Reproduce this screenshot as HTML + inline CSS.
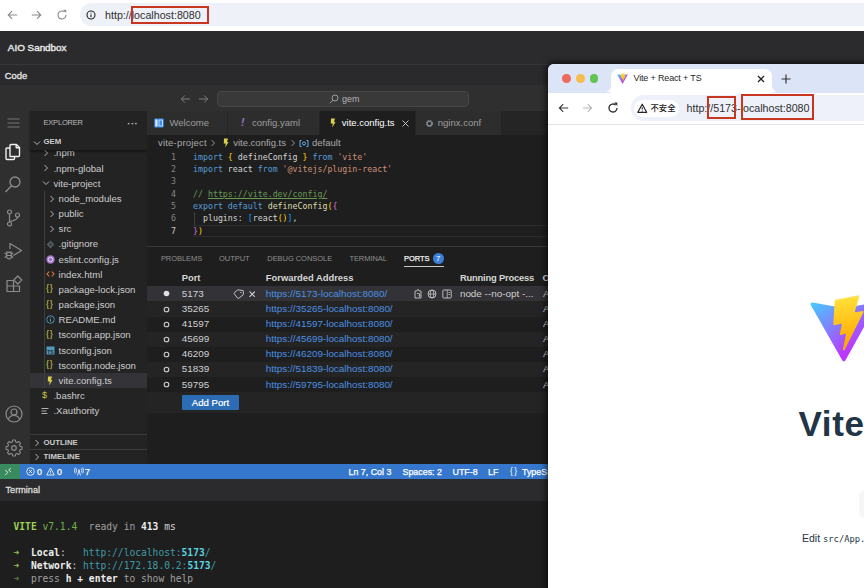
<!DOCTYPE html>
<html>
<head>
<meta charset="utf-8">
<title>AIO Sandbox</title>
<style>
*{box-sizing:border-box;margin:0;padding:0}
html,body{width:864px;height:588px;overflow:hidden;background:#1e1e1e;font-family:"Liberation Sans","Noto Sans CJK SC",sans-serif;}
.abs{position:absolute}
#root{position:relative;width:864px;height:588px;overflow:hidden}
.t{position:absolute;white-space:nowrap;line-height:1}
.mono{font-family:"DejaVu Sans Mono","Liberation Mono",monospace}
/* outer browser */
#obar{left:0;top:0;width:864px;height:31px;background:#fff}
#opill{left:80px;top:3px;width:800px;height:23px;border-radius:12px;background:#eef1f8}
.redbox{border:2.600px solid #c8361f;position:absolute}
/* app header */
#aio{left:0;top:31px;width:864px;height:33.500px;background:#2b2b2d;border-bottom:1px solid #363638}
#code{left:0;top:64.500px;width:864px;height:21px;background:#2a2a2c;border-bottom:1px solid #353537}
/* vscode */
#title{left:0;top:85px;width:864px;height:26px;background:#2f2f30}
#search{left:217px;top:91px;width:252px;height:16px;border-radius:4px;background:#393939;border:1px solid #464646}
#act{left:0;top:111px;width:30px;height:353px;background:#2f2f30}
#side{left:30px;top:111px;width:117px;height:353px;background:#232324}
#tabs{left:147px;top:111px;width:717px;height:23.600px;background:#252526}
.tab{position:absolute;top:0;height:23.600px;background:#2d2d2d;border-right:1px solid #252526}
.tab.on{background:#1e1e1e}
#editor{left:147px;top:134.600px;width:717px;height:111.400px;background:#1e1e1e}
#panel{left:147px;top:246px;width:717px;height:218px;background:#1e1e1e;border-top:1px solid #3a3a3a}
#status{left:0;top:464px;width:864px;height:15.400px;background:#3477cc}
#termh{left:0;top:479.400px;width:864px;height:21.800px;background:#2b2b2d}
#term{left:0;top:501.200px;width:864px;height:88px;background:#1e1e1e}
.tree{font-size:9.6px;color:#cccccc}
.code{font-size:8.280px}
.row{position:absolute;left:147px;width:420px;height:15px}

#codebox{left:147px;top:150.500px;width:717px;font-size:8.280px;color:#d4d4d4}
#codebox .ln{position:relative;height:12.400px;line-height:12.400px;white-space:pre}
#codebox .no{position:absolute;left:0;width:29px;text-align:right;color:#858585}
#codebox .cur .no{color:#c6c6c6}
#codebox .tx{position:absolute;left:46px}
#codebox .cur:after{content:"";position:absolute;left:46px;right:0;top:0;bottom:0;border-top:1px solid #2c2c2c;border-bottom:1px solid #2c2c2c}
#codebox .ig{position:absolute;left:1px;top:0;width:1px;height:12.400px;background:#404040}
</style>
</head>
<body>
<div id="root">
<!-- OUTER BROWSER BAR -->
<div id="obar" class="abs"></div>
<div id="opill" class="abs"></div>

<svg class="abs" style="left:6.5px;top:10px" width="11" height="10" viewBox="0 0 11 10"><path d="M10.2 5H1.5M5 1.2L1.2 5L5 8.8" stroke="#8a8a8a" stroke-width="1.1" fill="none"/></svg>
<svg class="abs" style="left:31px;top:10px" width="11" height="10" viewBox="0 0 11 10"><path d="M0.8 5H9.5M6 1.2L9.8 5L6 8.8" stroke="#8a8a8a" stroke-width="1.1" fill="none"/></svg>
<svg class="abs" style="left:55.5px;top:9px" width="12" height="12" viewBox="0 0 12 12"><path d="M10 6A4 4 0 1 1 8.6 2.95" stroke="#8a8a8a" stroke-width="1.1" fill="none"/><path d="M7.2 0.8H10.2V3.9Z" fill="#8a8a8a"/></svg>
<svg class="abs" style="left:86px;top:10px" width="10" height="10" viewBox="0 0 10 10"><circle cx="5" cy="5" r="4" stroke="#222" stroke-width="1.1" fill="none"/><path d="M5 4.4V7.2M5 2.7V3.6" stroke="#222" stroke-width="1.1"/></svg>
<div class="t" style="left:105px;top:9.5px;font-size:10.700px;color:#303030">http://localhost:8080</div>
<div class="redbox" style="left:130.800px;top:5.700px;width:78.500px;height:18.500px"></div>


<!-- APP HEADER -->
<div id="aio" class="abs"></div>
<div class="t" style="left:7.800px;top:42.800px;font-size:9.900px;color:#e8e8e8;-webkit-text-stroke:0.4px #e8e8e8">AIO Sandbox</div>
<div id="code" class="abs"></div>
<div class="t" style="left:4.800px;top:71px;font-size:9.400px;color:#e0e0e0;-webkit-text-stroke:0.35px #e0e0e0">Code</div>

<!-- VSCODE -->
<div id="title" class="abs"></div>
<div id="search" class="abs"></div>

<svg class="abs" style="left:180px;top:94px" width="11" height="10" viewBox="0 0 11 10"><path d="M10 5H1.5M4.8 1.5L1.3 5L4.8 8.5" stroke="#7e7e7e" stroke-width="1" fill="none"/></svg>
<svg class="abs" style="left:198px;top:94px" width="11" height="10" viewBox="0 0 11 10"><path d="M1 5H9.5M6.2 1.5L9.7 5L6.2 8.5" stroke="#7e7e7e" stroke-width="1" fill="none"/></svg>
<svg class="abs" style="left:329px;top:94px" width="10" height="10" viewBox="0 0 10 10"><circle cx="6" cy="4" r="3" stroke="#a8a8a8" stroke-width="0.9" fill="none"/><path d="M3.8 6.2L0.8 9.2" stroke="#a8a8a8" stroke-width="0.9"/></svg>
<div class="t" style="left:342px;top:94.5px;font-size:9px;color:#b4b4b4">gem</div>

<div id="act" class="abs"></div>

<svg class="abs" style="left:7px;top:117px" width="14" height="12" viewBox="0 0 14 12"><path d="M0.5 2H12.5M0.5 6H12.5M0.5 10H12.5" stroke="#7d7d7d" stroke-width="0.9"/></svg>
<!-- files -->
<svg class="abs" style="left:3px;top:141.500px" width="20" height="20" viewBox="0 0 20 20" fill="none" stroke="#f0f0f0" stroke-width="1.4" stroke-linejoin="round"><path d="M7 14.5V3.5Q7 2.5 8 2.5H13.5L16.5 5.5V13.5Q16.5 14.5 15.5 14.5H8Q7 14.5 7 14.5Z"/><path d="M13.2 2.7V5.8H16.3"/><path d="M7 6H4Q3 6 3 7V16.5Q3 17.5 4 17.5H10.5Q11.5 17.5 11.5 16.5V14.5"/></svg>
<!-- search -->
<svg class="abs" style="left:3.400px;top:174.200px" width="20" height="20" viewBox="0 0 20 20" fill="none" stroke="#8c8c8c" stroke-width="1.3"><circle cx="12" cy="8" r="5"/><path d="M8.5 11.8L2.5 18"/></svg>
<!-- scm -->
<svg class="abs" style="left:2.800px;top:207.500px" width="20" height="20" viewBox="0 0 20 20" fill="none" stroke="#8c8c8c" stroke-width="1.2"><circle cx="6.5" cy="4" r="2"/><circle cx="6.5" cy="16" r="2"/><circle cx="14.5" cy="7" r="2"/><path d="M6.5 6V14M14.5 9Q14.5 12 6.5 13.5"/></svg>
<!-- debug -->
<svg class="abs" style="left:1.800px;top:239.500px" width="22" height="22" viewBox="0 0 22 22" fill="none" stroke="#8c8c8c" stroke-width="1.2" stroke-linejoin="round"><path d="M8 9V3.5L19.5 10.5L11.5 15.5"/><ellipse cx="7" cy="15.5" rx="2.6" ry="3.3"/><path d="M4.4 14L2.5 13M4.4 16.5L2.5 17.5M9.6 14L11.3 13M9.6 16.5L11.3 17.5M5.3 12.5L4.5 11.3M8.7 12.5L9.5 11.3M4.5 15.5H9.5"/></svg>
<!-- extensions -->
<svg class="abs" style="left:4px;top:274px" width="20" height="20" viewBox="0 0 20 20" fill="none" stroke="#8c8c8c" stroke-width="1.2" stroke-linejoin="round"><path d="M3 6.5H9.5V17.5H3ZM3 12H15.5V17.5H9.5M9.5 12H15.5"/><path d="M13.8 2L17.8 6L13.8 10L9.8 6Z"/></svg>
<!-- account -->
<svg class="abs" style="left:3.5px;top:404px" width="20" height="20" viewBox="0 0 20 20" fill="none" stroke="#8c8c8c" stroke-width="1.2"><circle cx="10" cy="10" r="8"/><circle cx="10" cy="8" r="3"/><path d="M4.3 15.5Q5.5 11.5 10 11.5Q14.5 11.5 15.7 15.5"/></svg>
<!-- gear -->
<svg class="abs" style="left:3.5px;top:437.5px" width="20" height="20" viewBox="0 0 20 20" fill="none" stroke="#8c8c8c" stroke-width="1.2" stroke-linejoin="round"><path d="M8.6 2h2.8l.4 2.1 1.5.7 1.8-1.2 2 2-1.2 1.8.7 1.5 2.100.4v2.800l-2.100.4-.7 1.500 1.200 1.800-2 2-1.800-1.200-1.500.7-.4 2.100h-2.800l-.4-2.100-1.500-.7-1.800 1.200-2-2 1.200-1.800-.7-1.500-2.100-.4v-2.800l2.100-.4.700-1.500-1.200-1.800 2-2 1.800 1.200 1.500-.7z" transform="translate(10 10) scale(0.92) translate(-10 -10.700)"/><circle cx="10" cy="10" r="2.300"/></svg>

<div id="side" class="abs"></div>
<div class="abs" style="left:30px;top:372.95px;width:117px;height:15.2px;background:#343438"></div>
<div class="abs" style="left:44px;top:190.94px;width:1px;height:197.21px;background:#3e3e3e"></div>
<svg class="abs" style="left:42px;top:149.00px" width="8" height="8" viewBox="0 0 8 8"><path d="M2.5 1L5.5 4L2.5 7" stroke="#c5c5c5" stroke-width="0.9" fill="none"/></svg>
<div class="t tree" style="left:53.4px;top:148.40px">.npm</div>
<svg class="abs" style="left:42px;top:164.17px" width="8" height="8" viewBox="0 0 8 8"><path d="M2.5 1L5.5 4L2.5 7" stroke="#c5c5c5" stroke-width="0.9" fill="none"/></svg>
<div class="t tree" style="left:53.4px;top:163.57px">.npm-global</div>
<svg class="abs" style="left:42px;top:179.34px" width="8" height="8" viewBox="0 0 8 8"><path d="M1 2.5L4 5.5L7 2.5" stroke="#c5c5c5" stroke-width="0.9" fill="none"/></svg>
<div class="t tree" style="left:53.4px;top:178.74px">vite-project</div>
<svg class="abs" style="left:47.5px;top:194.51px" width="8" height="8" viewBox="0 0 8 8"><path d="M2.5 1L5.5 4L2.5 7" stroke="#c5c5c5" stroke-width="0.9" fill="none"/></svg>
<div class="t tree" style="left:58.6px;top:193.91px">node_modules</div>
<svg class="abs" style="left:47.5px;top:209.68px" width="8" height="8" viewBox="0 0 8 8"><path d="M2.5 1L5.5 4L2.5 7" stroke="#c5c5c5" stroke-width="0.9" fill="none"/></svg>
<div class="t tree" style="left:58.6px;top:209.08px">public</div>
<svg class="abs" style="left:47.5px;top:224.85px" width="8" height="8" viewBox="0 0 8 8"><path d="M2.5 1L5.5 4L2.5 7" stroke="#c5c5c5" stroke-width="0.9" fill="none"/></svg>
<div class="t tree" style="left:58.6px;top:224.25px">src</div>
<svg class="abs" style="left:45.8px;top:239.52px" width="9" height="9" viewBox="0 0 9 9"><path d="M4.500.6L8.400 4.500L4.500 8.400L.6 4.500Z" fill="#4d5a5e"/><circle cx="4.500" cy="4.500" r="1" fill="#2a2a2a"/></svg>
<div class="t tree" style="left:58.6px;top:239.42px">.gitignore</div>
<svg class="abs" style="left:45.8px;top:254.69px" width="9" height="9" viewBox="0 0 9 9"><circle cx="4.500" cy="4.500" r="4.200" fill="#a074c4"/><circle cx="4.500" cy="4.500" r="2.300" fill="none" stroke="#e6d8f5" stroke-width="0.9"/></svg>
<div class="t tree" style="left:58.6px;top:254.59px">eslint.config.js</div>
<svg class="abs" style="left:45.8px;top:270.36px" width="9" height="8" viewBox="0 0 9 8"><path d="M3.300 1.500L1 4L3.300 6.500M5.700 1.500L8 4L5.700 6.500" stroke="#e37933" stroke-width="1.100" fill="none"/></svg>
<div class="t tree" style="left:58.6px;top:269.76px">index.html</div>
<div class="t" style="left:46.1px;top:284.33px;font-size:9.200px;color:#c9c94a;letter-spacing:0.6px">{}</div>
<div class="t tree" style="left:58.6px;top:284.93px">package-lock.json</div>
<div class="t" style="left:46.1px;top:299.50px;font-size:9.200px;color:#c9c94a;letter-spacing:0.6px">{}</div>
<div class="t tree" style="left:58.6px;top:300.10px">package.json</div>
<svg class="abs" style="left:45.8px;top:315.37px" width="9" height="9" viewBox="0 0 9 9"><circle cx="4.500" cy="4.500" r="3.800" fill="none" stroke="#519aba" stroke-width="0.9"/><path d="M4.500 4V6.600M4.500 2.400V3.200" stroke="#519aba" stroke-width="1"/></svg>
<div class="t tree" style="left:58.6px;top:315.27px">README.md</div>
<div class="t" style="left:46.1px;top:329.84px;font-size:9.200px;color:#c9c94a;letter-spacing:0.6px">{}</div>
<div class="t tree" style="left:58.6px;top:330.44px">tsconfig.app.json</div>
<svg class="abs" style="left:45.8px;top:345.71px" width="9" height="9" viewBox="0 0 9 9"><rect x=".5" y=".5" width="8" height="8" fill="#519aba"/><text x="1.300" y="7.600" font-size="5" font-weight="bold" font-family="Liberation Sans,sans-serif" fill="#1e2a33">TS</text></svg>
<div class="t tree" style="left:58.6px;top:345.61px">tsconfig.json</div>
<div class="t" style="left:46.1px;top:360.18px;font-size:9.200px;color:#c9c94a;letter-spacing:0.6px">{}</div>
<div class="t tree" style="left:58.6px;top:360.78px">tsconfig.node.json</div>
<svg class="abs" style="left:46.3px;top:375.55px" width="8" height="10" viewBox="0 0 8 10"><path d="M2 .5H6L5 4H6.500L3.200 9.500L3.800 5.500H1.800Z" fill="#d8d04a"/></svg>
<div class="t tree" style="left:58.6px;top:375.95px">vite.config.ts</div>
<div class="t" style="left:42px;top:390.92px;font-size:9px;color:#cbcb41">$</div>
<div class="t tree" style="left:53.4px;top:391.12px">.bashrc</div>
<svg class="abs" style="left:41px;top:406.89px" width="8" height="8" viewBox="0 0 8 8"><path d="M.5 1.500H7.500M.5 4H5.500M.5 6.500H6.500" stroke="#b0b0b0" stroke-width="1"/></svg>
<div class="t tree" style="left:53.4px;top:406.29px">.Xauthority</div>
<div class="abs" style="left:30px;top:111px;width:117px;height:38.500px;background:#232324;box-shadow:0 1.500px 2px rgba(0,0,0,0.4)"></div>
<div class="t" style="left:43.500px;top:119.200px;font-size:7.500px;color:#bbbbbb;letter-spacing:-0.2px">EXPLORER</div>
<div class="t" style="left:127.300px;top:118.500px;font-size:9.500px;color:#c5c5c5;letter-spacing:0.5px;font-weight:bold">···</div>
<svg class="abs" style="left:32.5px;top:138.50px" width="8" height="8" viewBox="0 0 8 8"><path d="M1 2.5L4 5.5L7 2.5" stroke="#c5c5c5" stroke-width="0.9" fill="none"/></svg>
<div class="t" style="left:43.500px;top:138.300px;font-size:7.800px;color:#cccccc;font-weight:bold;letter-spacing:0px">GEM</div>
<div class="abs" style="left:30px;top:433.500px;width:117px;height:1px;background:#3c3c3c"></div>
<div class="abs" style="left:30px;top:449px;width:117px;height:1px;background:#3c3c3c"></div>
<svg class="abs" style="left:32.5px;top:438.60px" width="8" height="8" viewBox="0 0 8 8"><path d="M2.5 1L5.5 4L2.5 7" stroke="#c5c5c5" stroke-width="0.9" fill="none"/></svg>
<div class="t" style="left:43.500px;top:438.500px;font-size:7.800px;color:#cccccc;font-weight:bold;letter-spacing:0px">OUTLINE</div>
<svg class="abs" style="left:32.5px;top:453.40px" width="8" height="8" viewBox="0 0 8 8"><path d="M2.5 1L5.5 4L2.5 7" stroke="#c5c5c5" stroke-width="0.9" fill="none"/></svg>
<div class="t" style="left:43.500px;top:453.200px;font-size:7.800px;color:#cccccc;font-weight:bold;letter-spacing:0px">TIMELINE</div>
<div id="tabs" class="abs">

<div class="tab" style="left:0;width:81px"></div>
<div class="tab" style="left:81px;width:92px"></div>
<div class="tab on" style="left:173px;width:96px"></div>
<div class="tab" style="left:269px;width:85.500px"></div>
<svg class="abs" style="left:7px;top:6.500px" width="10" height="10" viewBox="0 0 10 10"><rect x=".3" y=".5" width="9.400" height="9" rx="1" fill="#3b8eea"/><rect x="1.300" y="1.500" width="2.200" height="7" fill="#d6e9ff"/><path d="M5 2V8H8.500V2Z" fill="none" stroke="#d6e9ff" stroke-width=".8"/></svg>
<div class="t" style="left:22.500px;top:7px;font-size:9.500px;color:#9d9d9d">Welcome</div>
<div class="t" style="left:94px;top:6px;font-size:10.500px;color:#a074c4;font-weight:bold;font-style:italic">!</div>
<div class="t" style="left:105px;top:7px;font-size:9.500px;color:#9d9d9d">config.yaml</div>
<svg class="abs" style="left:182px;top:6.5px" width="8" height="10" viewBox="0 0 8 10"><path d="M2 .5H6L5 4H6.500L3.200 9.500L3.800 5.500H1.800Z" fill="#d8d04a"/></svg>
<div class="t" style="left:194.800px;top:7px;font-size:9.500px;color:#ffffff">vite.config.ts</div>
<svg class="abs" style="left:255px;top:8.500px" width="7" height="7" viewBox="0 0 7 7"><path d="M.5 .5L6.500 6.500M6.500 .5L.5 6.500" stroke="#d0d0d0" stroke-width=".9"/></svg>
<svg class="abs" style="left:277.500px;top:7.500px" width="9" height="9" viewBox="0 0 9 9"><circle cx="4.500" cy="4.500" r="2.600" fill="none" stroke="#7f8b91" stroke-width="1.800" stroke-dasharray="1.360 .68"/><circle cx="4.500" cy="4.500" r="2.300" fill="none" stroke="#7f8b91" stroke-width="1.100"/></svg>
<div class="t" style="left:290.800px;top:7px;font-size:9.500px;color:#9d9d9d">nginx.conf</div>

</div>
<div id="editor" class="abs"></div>
<div class="t" style="left:158px;top:138px;font-size:9.500px;letter-spacing:0.2px;color:#a9a9a9">vite-project</div>
<svg class="abs" style="left:209px;top:139px" width="8" height="8" viewBox="0 0 8 8"><path d="M2.500 1L5.500 4L2.500 7" stroke="#a0a0a0" stroke-width=".9" fill="none"/></svg>
<svg class="abs" style="left:221.5px;top:137.5px" width="8" height="10" viewBox="0 0 8 10"><path d="M2 .5H6L5 4H6.500L3.200 9.500L3.800 5.500H1.800Z" fill="#d8d04a"/></svg>
<div class="t" style="left:233.200px;top:138px;font-size:9.500px;color:#a9a9a9">vite.config.ts</div>
<svg class="abs" style="left:289px;top:139px" width="8" height="8" viewBox="0 0 8 8"><path d="M2.500 1L5.500 4L2.500 7" stroke="#a0a0a0" stroke-width=".9" fill="none"/></svg>
<svg class="abs" style="left:298.500px;top:138.500px" width="10" height="9" viewBox="0 0 10 9"><path d="M2.500 1.500H1V7.500H2.500M7.500 1.500H9V7.500H7.500" stroke="#75beff" stroke-width=".9" fill="none"/><circle cx="5" cy="4.500" r="1.500" fill="none" stroke="#75beff" stroke-width=".9"/></svg>
<div class="t" style="left:312px;top:138px;font-size:9.500px;color:#a9a9a9">default</div>
<div id="codebox" class="abs mono">
<div class="ln"><span class="no">1</span><span class="tx"><span style="color:#569cd6">import</span> <span style="color:#ffd700">{</span> <span style="color:#d4d4d4">defineConfig</span> <span style="color:#ffd700">}</span> <span style="color:#569cd6">from</span> <span style="color:#ce9178">'vite'</span></span></div>
<div class="ln"><span class="no">2</span><span class="tx"><span style="color:#569cd6">import</span> <span style="color:#d4d4d4">react</span> <span style="color:#569cd6">from</span> <span style="color:#ce9178">'@vitejs/plugin-react'</span></span></div>
<div class="ln"><span class="no">3</span><span class="tx"></span></div>
<div class="ln"><span class="no">4</span><span class="tx"><span style="color:#6a9955">// <span style="text-decoration:underline">https://vite.dev/config/</span></span></span></div>
<div class="ln"><span class="no">5</span><span class="tx"><span style="color:#569cd6">export</span> <span style="color:#569cd6">default</span> <span style="color:#dcdcaa">defineConfig</span><span style="color:#ffd700">(</span><span style="color:#da70d6">{</span></span></div>
<div class="ln"><span class="no">6</span><span class="tx"><i class="ig"></i>  <span style="color:#d4d4d4">plugins: </span><span style="color:#179fff">[</span><span style="color:#d4d4d4">react</span><span style="color:#ffd700">()</span><span style="color:#179fff">]</span><span style="color:#d4d4d4">,</span></span></div>
<div class="ln cur"><span class="no">7</span><span class="tx"><span style="color:#da70d6">}</span><span style="color:#ffd700">)</span></span></div>
</div>
<div id="panel" class="abs"></div>
<div class="abs" style="left:147px;top:286.30px;width:717px;height:15.15px;background:#333337"></div>
<div class="abs" style="left:147px;top:301.45px;width:717px;height:15.15px;background:#242425"></div>
<div class="abs" style="left:147px;top:331.75px;width:717px;height:15.15px;background:#242425"></div>
<div class="abs" style="left:147px;top:362.05px;width:717px;height:15.15px;background:#242425"></div>
<div class="abs" style="left:147px;top:392.350px;width:717px;height:20.650px;background:#242425"></div>
<div class="t" style="left:160.9px;top:254.800px;font-size:7.500px;color:#8e8e8e;letter-spacing:-0.05px">PROBLEMS</div>
<div class="t" style="left:219px;top:254.800px;font-size:7.500px;color:#8e8e8e;letter-spacing:-0.05px">OUTPUT</div>
<div class="t" style="left:267.3px;top:254.800px;font-size:7.500px;color:#8e8e8e;letter-spacing:-0.05px">DEBUG CONSOLE</div>
<div class="t" style="left:349.4px;top:254.800px;font-size:7.500px;color:#8e8e8e;letter-spacing:-0.05px">TERMINAL</div>
<div class="t" style="left:404px;top:254.800px;font-size:7.500px;color:#f0f0f0;letter-spacing:-0.05px;-webkit-text-stroke:0.25px #f0f0f0">PORTS</div>
<div class="abs" style="left:432.500px;top:253px;width:11px;height:11px;border-radius:50%;background:#3b7fd9"></div>
<div class="t" style="left:436px;top:254.800px;font-size:7.700px;color:#fff">7</div>
<div class="abs" style="left:404px;top:265.500px;width:40px;height:1.200px;background:#c8c8c8"></div>
<div class="t" style="left:181.700px;top:273px;font-size:9.400px;font-weight:bold;color:#d6d6d6">Port</div>
<div class="t" style="left:265.800px;top:273px;font-size:9.400px;font-weight:bold;color:#d6d6d6;letter-spacing:0px">Forwarded Address</div>
<div class="t" style="left:459.900px;top:273px;font-size:9.400px;font-weight:bold;color:#d6d6d6;letter-spacing:-0.2px">Running Process</div>
<div class="t" style="left:542.500px;top:273px;font-size:9.400px;font-weight:bold;color:#d6d6d6">Origin</div>
<svg class="abs" style="left:163px;top:290.37px" width="7" height="7" viewBox="0 0 7 7"><circle cx="3.500" cy="3.500" r="2.800" fill="#e0e0e0"/></svg>
<div class="t" style="left:181.700px;top:288.68px;font-size:9.900px;color:#d0d0d0">5173</div>
<div class="t" style="left:265.800px;top:288.68px;font-size:9.900px;color:#4c8fe2">https://5173-localhost:8080/</div>
<div class="t" style="left:459.900px;top:288.68px;font-size:9.900px;color:#d0d0d0">node --no-opt -...</div>
<div class="t" style="left:543px;top:288.68px;font-size:9.900px;color:#d0d0d0">Auto Forwarded</div>
<svg class="abs" style="left:163px;top:305.52px" width="7" height="7" viewBox="0 0 7 7"><circle cx="3.500" cy="3.500" r="2.300" fill="none" stroke="#cfcfcf" stroke-width="1.100"/></svg>
<div class="t" style="left:181.700px;top:303.82px;font-size:9.900px;color:#d0d0d0">35265</div>
<div class="t" style="left:265.800px;top:303.82px;font-size:9.900px;color:#4c8fe2">https://35265-localhost:8080/</div>
<div class="t" style="left:543px;top:303.82px;font-size:9.900px;color:#d0d0d0">Auto Forwarded</div>
<svg class="abs" style="left:163px;top:320.68px" width="7" height="7" viewBox="0 0 7 7"><circle cx="3.500" cy="3.500" r="2.300" fill="none" stroke="#cfcfcf" stroke-width="1.100"/></svg>
<div class="t" style="left:181.700px;top:318.98px;font-size:9.900px;color:#d0d0d0">41597</div>
<div class="t" style="left:265.800px;top:318.98px;font-size:9.900px;color:#4c8fe2">https://41597-localhost:8080/</div>
<div class="t" style="left:543px;top:318.98px;font-size:9.900px;color:#d0d0d0">Auto Forwarded</div>
<svg class="abs" style="left:163px;top:335.82px" width="7" height="7" viewBox="0 0 7 7"><circle cx="3.500" cy="3.500" r="2.300" fill="none" stroke="#cfcfcf" stroke-width="1.100"/></svg>
<div class="t" style="left:181.700px;top:334.12px;font-size:9.900px;color:#d0d0d0">45699</div>
<div class="t" style="left:265.800px;top:334.12px;font-size:9.900px;color:#4c8fe2">https://45699-localhost:8080/</div>
<div class="t" style="left:543px;top:334.12px;font-size:9.900px;color:#d0d0d0">Auto Forwarded</div>
<svg class="abs" style="left:163px;top:350.98px" width="7" height="7" viewBox="0 0 7 7"><circle cx="3.500" cy="3.500" r="2.300" fill="none" stroke="#cfcfcf" stroke-width="1.100"/></svg>
<div class="t" style="left:181.700px;top:349.28px;font-size:9.900px;color:#d0d0d0">46209</div>
<div class="t" style="left:265.800px;top:349.28px;font-size:9.900px;color:#4c8fe2">https://46209-localhost:8080/</div>
<div class="t" style="left:543px;top:349.28px;font-size:9.900px;color:#d0d0d0">Auto Forwarded</div>
<svg class="abs" style="left:163px;top:366.12px" width="7" height="7" viewBox="0 0 7 7"><circle cx="3.500" cy="3.500" r="2.300" fill="none" stroke="#cfcfcf" stroke-width="1.100"/></svg>
<div class="t" style="left:181.700px;top:364.43px;font-size:9.900px;color:#d0d0d0">51839</div>
<div class="t" style="left:265.800px;top:364.43px;font-size:9.900px;color:#4c8fe2">https://51839-localhost:8080/</div>
<div class="t" style="left:543px;top:364.43px;font-size:9.900px;color:#d0d0d0">Auto Forwarded</div>
<svg class="abs" style="left:163px;top:381.28px" width="7" height="7" viewBox="0 0 7 7"><circle cx="3.500" cy="3.500" r="2.300" fill="none" stroke="#cfcfcf" stroke-width="1.100"/></svg>
<div class="t" style="left:181.700px;top:379.58px;font-size:9.900px;color:#d0d0d0">59795</div>
<div class="t" style="left:265.800px;top:379.58px;font-size:9.900px;color:#4c8fe2">https://59795-localhost:8080/</div>
<div class="t" style="left:543px;top:379.58px;font-size:9.900px;color:#d0d0d0">Auto Forwarded</div>
<svg class="abs" style="left:233px;top:288.88px" width="11" height="10" viewBox="0 0 11 10"><path d="M4.200 1H9.500Q10.200 1 10.200 1.700V5.300L6.200 9.300Q5.700 9.800 5.200 9.300L1.200 5.300Q.7 4.800 1.200 4.300Z" fill="none" stroke="#c8c8c8" stroke-width=".9" transform="rotate(8 5.500 5)"/><circle cx="8" cy="3.500" r=".7" fill="#c8c8c8"/></svg>
<svg class="abs" style="left:248.700px;top:290.68px" width="6.400" height="6.400" viewBox="0 0 7 7"><path d="M.5 .5L6.500 6.500M6.500 .5L.5 6.500" stroke="#d0d0d0" stroke-width="1.150"/></svg>
<svg class="abs" style="left:414.300px;top:288.28px" width="8.500" height="11" viewBox="0 0 8.500 11"><path d="M1 10V3H2.800L4 1.200L5.200 3H7V10Z" fill="none" stroke="#c8c8c8" stroke-width=".9" stroke-linejoin="round"/><path d="M2.800 5.500H5.500V8.500M5.500 8.500L4.600 7.600M5.500 8.500L6.400 7.600" stroke="#c8c8c8" stroke-width=".8" fill="none"/></svg>
<svg class="abs" style="left:427.100px;top:289.07px" width="10" height="10" viewBox="0 0 10 10"><circle cx="5" cy="5" r="4" fill="none" stroke="#c8c8c8" stroke-width=".9"/><ellipse cx="5" cy="5" rx="1.800" ry="4" fill="none" stroke="#c8c8c8" stroke-width=".8"/><path d="M1 5H9" stroke="#c8c8c8" stroke-width=".8"/></svg>
<svg class="abs" style="left:441.500px;top:289.07px" width="10" height="10" viewBox="0 0 10 10"><rect x=".8" y="1" width="8.400" height="8" rx=".8" fill="none" stroke="#c8c8c8" stroke-width=".9"/><path d="M5.200 1V9M6.500 3.500H8M6.500 5.500H8" stroke="#c8c8c8" stroke-width=".8"/></svg>
<div class="abs" style="left:181.700px;top:395.300px;width:57.500px;height:14.500px;background:#2c6cb4;border-radius:1px"></div>
<div class="t" style="left:181.700px;top:397.500px;width:57.500px;text-align:center;font-size:9.600px;color:#fff;-webkit-text-stroke:0.2px #fff">Add Port</div>
<div id="status" class="abs"></div>
<div class="abs" style="left:0;top:464px;width:19.700px;height:15.500px;background:#3a8a60"></div>
<svg class="abs" style="left:3px;top:466px" width="12" height="12" viewBox="0 0 12 12"><path d="M2.100 4.100L4.900 6.300L2.100 9.200M7.800 2.200L5.700 4.100L7.800 5.800" stroke="#e8e8e8" stroke-width=".95" fill="none"/></svg>
<svg class="abs" style="left:25.500px;top:467.100px" width="9" height="9" viewBox="0 0 9 9"><circle cx="4.500" cy="4.500" r="3.800" fill="none" stroke="#fff" stroke-width=".8"/><path d="M3 3L6 6M6 3L3 6" stroke="#fff" stroke-width=".8"/></svg>
<div class="t" style="left:37px;top:467.600px;font-size:8.900px;color:#fff;-webkit-text-stroke:0.25px #fff">0</div>
<svg class="abs" style="left:45.500px;top:467.100px" width="9" height="9" viewBox="0 0 9 9"><path d="M4.500 1L8.300 8H.7Z" fill="none" stroke="#fff" stroke-width=".8" stroke-linejoin="round"/><path d="M4.500 3.500V5.600M4.500 6.300V7" stroke="#fff" stroke-width=".8"/></svg>
<div class="t" style="left:57px;top:467.600px;font-size:8.900px;color:#fff;-webkit-text-stroke:0.25px #fff">0</div>
<svg class="abs" style="left:73.500px;top:467.100px" width="10" height="9" viewBox="0 0 10 9"><path d="M3.500 8.500L5 3.500L6.500 8.500M2.700 5.500Q1.500 3.500 2.700 1.500M7.300 5.500Q8.500 3.500 7.300 1.500M1.300 6.500Q-.5 3.500 1.300 .5M8.700 6.500Q10.500 3.500 8.700 .5" fill="none" stroke="#fff" stroke-width=".8"/><circle cx="5" cy="3.200" r=".8" fill="#fff"/></svg>
<div class="t" style="left:85px;top:467.600px;font-size:8.900px;color:#fff;-webkit-text-stroke:0.25px #fff">7</div>
<div class="t" style="left:348.5px;top:467.600px;font-size:8.900px;color:#fff;-webkit-text-stroke:0.25px #fff">Ln 7, Col 3</div>
<div class="t" style="left:402.5px;top:467.600px;font-size:8.900px;color:#fff;-webkit-text-stroke:0.25px #fff">Spaces: 2</div>
<div class="t" style="left:452.5px;top:467.600px;font-size:8.900px;color:#fff;-webkit-text-stroke:0.25px #fff">UTF-8</div>
<div class="t" style="left:488px;top:467.600px;font-size:8.900px;color:#fff;-webkit-text-stroke:0.25px #fff">LF</div>
<div class="t" style="left:522px;top:467.600px;font-size:8.900px;color:#fff;-webkit-text-stroke:0.25px #fff">TypeScript</div>
<div class="t" style="left:510px;top:467.300px;font-size:8.500px;color:#fff;letter-spacing:1.500px">{}</div>
<div id="termh" class="abs"></div>
<div class="t" style="left:5.500px;top:486px;font-size:9.150px;color:#dddddd;-webkit-text-stroke:0.3px #ddd">Terminal</div>
<div id="term" class="abs"></div>
<div class="t mono" style="left:13.500px;top:522px;font-size:9.650px;color:#cfcfcf;white-space:pre"><span style="color:#9fd356;font-weight:bold">VITE</span> <span style="color:#6fb04c">v7.1.4</span>  <span style="color:#a0a0a0">ready in</span> <b style="color:#ececec">413</b> <span style="color:#d4d4d4">ms</span></div>
<div class="t mono" style="left:13.500px;top:548px;font-size:9.650px;color:#cfcfcf;white-space:pre"><span style="color:#8cc152">➜</span>  <b style="color:#ececec">Local</b>:   <span style="color:#3e9ca6">http://localhost:<b style="color:#5cd3e0">5173</b>/</span></div>
<div class="t mono" style="left:13.500px;top:561px;font-size:9.650px;color:#cfcfcf;white-space:pre"><span style="color:#8cc152">➜</span>  <b style="color:#ececec">Network</b>: <span style="color:#3e9ca6">http://172.18.0.2:<b style="color:#5cd3e0">5173</b>/</span></div>
<div class="t mono" style="left:13.500px;top:574.2px;font-size:9.650px;color:#cfcfcf;white-space:pre"><span style="color:#55803a">➜</span>  <span style="color:#a0a0a0">press</span> <b style="color:#ececec">h + enter</b> <span style="color:#a0a0a0">to show help</span></div>

<!-- INNER BROWSER WINDOW -->

<div id="win" class="abs" style="left:548px;top:64px;width:330px;height:540px;background:#fff;border-top-left-radius:6px;overflow:hidden;box-shadow:0 0 7px 0.500px rgba(0,0,0,0.8)">
  <div class="abs" style="left:0;top:0;width:330px;height:28.700px;background:#dce5f7"></div>
  <!-- traffic lights -->
  <div class="abs" style="left:14.1px;top:10.200px;width:8.600px;height:8.600px;border-radius:50%;background:#ee6a5f"></div>
  <div class="abs" style="left:28.1px;top:10.200px;width:8.600px;height:8.600px;border-radius:50%;background:#f5bd4f"></div>
  <div class="abs" style="left:41.6px;top:10.200px;width:8.600px;height:8.600px;border-radius:50%;background:#61c454"></div>
  <!-- tab -->
  <div class="abs" style="left:63px;top:5px;width:161px;height:24px;background:#fff;border-radius:7px 7px 0 0"></div>
  <svg class="abs" style="left:57px;top:22px" width="6" height="6"><path d="M6 0V6H0A6 6 0 0 0 6 0Z" fill="#fff"/></svg>
  <svg class="abs" style="left:224px;top:22px" width="6" height="6"><path d="M0 0V6H6A6 6 0 0 1 0 0Z" fill="#fff"/></svg>
  <svg class="abs" style="left:69px;top:9px" width="11" height="11" viewBox="0 0 410 404"><defs><linearGradient id="g1" x1="6" y1="33" x2="235" y2="344" gradientUnits="userSpaceOnUse"><stop stop-color="#41D1FF"/><stop offset="1" stop-color="#BD34FE"/></linearGradient><linearGradient id="g2" x1="194.651" y1="8.818" x2="236.076" y2="292.989" gradientUnits="userSpaceOnUse"><stop stop-color="#FFEA83"/><stop offset="0.083" stop-color="#FFDD35"/><stop offset="1" stop-color="#FFA800"/></linearGradient></defs><path d="M399.641 59.5246L215.643 388.545C211.844 395.338 202.084 395.378 198.228 388.618L10.5817 59.5563C6.38087 52.1896 12.6802 43.2665 21.0281 44.7586L205.223 77.6824C206.398 77.8924 207.601 77.8904 208.776 77.6763L389.119 44.8058C397.439 43.2894 403.768 52.1434 399.641 59.5246Z" fill="url(#g1)"/><path d="M292.965 1.5744L156.801 28.2552C154.563 28.6937 152.906 30.5903 152.771 32.8664L144.395 174.33C144.198 177.662 147.258 180.248 150.51 179.498L188.42 170.749C191.967 169.931 195.172 173.055 194.443 176.622L183.18 231.775C182.422 235.487 185.907 238.661 189.532 237.56L212.947 230.446C216.577 229.344 220.065 232.527 219.297 236.242L201.398 322.875C200.278 328.294 207.486 331.249 210.492 326.603L212.5 323.5L323.454 102.072C325.312 98.3645 322.108 94.137 318.036 94.9228L279.014 102.454C275.347 103.161 272.227 99.746 273.262 96.1583L298.731 7.86689C299.767 4.27314 296.636 0.855181 292.965 1.5744Z" fill="url(#g2)"/></svg>
  <div class="t" style="left:85.500px;top:10px;font-size:9px;letter-spacing:-0.16px;color:#1f1f1f">Vite + React + TS</div>
  <svg class="abs" style="left:208.5px;top:11px" width="8" height="8" viewBox="0 0 8 8"><path d="M1 1L7 7M7 1L1 7" stroke="#222" stroke-width="1.3" fill="none"/></svg>
  <svg class="abs" style="left:232.5px;top:10px" width="10" height="10" viewBox="0 0 10 10"><path d="M5 0.5V9.5M0.5 5H9.5" stroke="#333" stroke-width="1.2" fill="none"/></svg>
  <!-- toolbar -->
  <div class="abs" style="left:0;top:59.600px;width:330px;height:1px;background:#e2e4ea"></div>
  <svg class="abs" style="left:9.5px;top:39px" width="11" height="10" viewBox="0 0 11 10"><path d="M10.2 5H1.700M5.200 1.200L1.400 5L5.200 8.800" stroke="#3a3a3a" stroke-width="1.150" fill="none"/></svg>
  <svg class="abs" style="left:34px;top:39px" width="11" height="10" viewBox="0 0 11 10"><path d="M0.800 5H9.300M5.800 1.200L9.600 5L5.800 8.800" stroke="#b9b9b9" stroke-width="1.150" fill="none"/></svg>
  <svg class="abs" style="left:58.5px;top:38px" width="12" height="12" viewBox="0 0 12 12"><path d="M10 6A4 4 0 1 1 8.6 2.95" stroke="#333" stroke-width="1.3" fill="none"/><path d="M7 0.6H10.3V4Z" fill="#333"/></svg>
  <div class="abs" style="left:83px;top:31px;width:260px;height:25.600px;border-radius:12.800px;background:#eef1f9"></div>
  <div class="abs" style="left:86px;top:35.5px;width:45px;height:17px;border-radius:9px;background:#fff"></div>
  <svg class="abs" style="left:89px;top:38.700px" width="10.500" height="10.500" viewBox="0 0 9 9"><path d="M4.5 1L8.3 8H0.7Z" stroke="#222" stroke-width="1" fill="none" stroke-linejoin="round"/><path d="M4.5 3.6V5.6M4.5 6.4V7.2" stroke="#222" stroke-width="0.9"/></svg>
  <div class="t" style="left:102.5px;top:39.5px;font-size:8.4px;color:#222;font-weight:500;font-family:'Liberation Sans','Noto Sans CJK SC',sans-serif">不安全</div>
  <div class="t" style="left:138.5px;top:38.5px;font-size:10.700px;color:#303030">http://5173-localhost:8080</div>
  <div class="redbox" style="left:159px;top:32px;width:29px;height:22.800px"></div>
  <div class="redbox" style="left:192.600px;top:30.100px;width:73.200px;height:25.600px"></div>
  <!-- page -->
  <svg class="abs" style="left:261px;top:231.3px" width="69" height="68" viewBox="0 0 410 404"><path d="M399.641 59.5246L215.643 388.545C211.844 395.338 202.084 395.378 198.228 388.618L10.5817 59.5563C6.38087 52.1896 12.6802 43.2665 21.0281 44.7586L205.223 77.6824C206.398 77.8924 207.601 77.8904 208.776 77.6763L389.119 44.8058C397.439 43.2894 403.768 52.1434 399.641 59.5246Z" fill="url(#g1)"/><path d="M292.965 1.5744L156.801 28.2552C154.563 28.6937 152.906 30.5903 152.771 32.8664L144.395 174.33C144.198 177.662 147.258 180.248 150.51 179.498L188.42 170.749C191.967 169.931 195.172 173.055 194.443 176.622L183.18 231.775C182.422 235.487 185.907 238.661 189.532 237.56L212.947 230.446C216.577 229.344 220.065 232.527 219.297 236.242L201.398 322.875C200.278 328.294 207.486 331.249 210.492 326.603L212.5 323.5L323.454 102.072C325.312 98.3645 322.108 94.137 318.036 94.9228L279.014 102.454C275.347 103.161 272.227 99.746 273.262 96.1583L298.731 7.86689C299.767 4.27314 296.636 0.855181 292.965 1.5744Z" fill="url(#g2)"/></svg>
  <div class="t" style="left:250.5px;top:342.300px;font-size:35px;letter-spacing:0.6px;font-weight:bold;color:#213547">Vite + React</div>
  <div class="abs" style="left:311px;top:427px;width:60px;height:27px;border-radius:5px;background:#f6f6f6"></div>
  <div class="t" style="left:254px;top:468.5px;font-size:10.5px;color:#213547">Edit <span class="mono" style="font-size:8.8px">src/App.tsx</span> and save to test HMR</div>
</div>

</div>
</body>
</html>
